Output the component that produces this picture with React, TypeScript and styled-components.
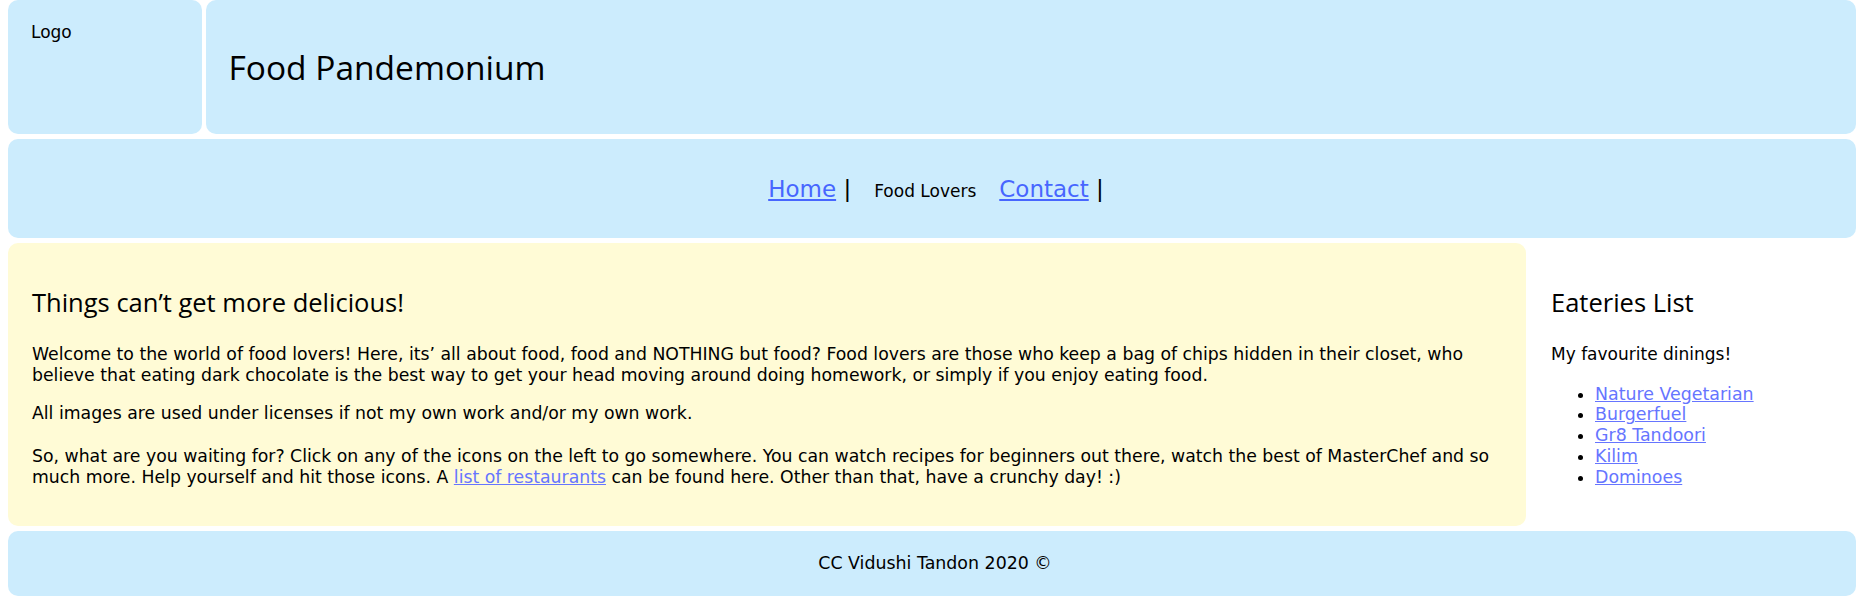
import React from "react";
import styled, { createGlobalStyle } from "styled-components";

const GlobalStyle = createGlobalStyle`
  html, body { background: #ffffff; }
  body {
    margin: 0 0 0 8px;
    font-family: "DejaVu Sans", "Liberation Sans", sans-serif;
    font-size: 17px;
    color: #000000;
  }
  * { box-sizing: border-box; }
`;

const BLUE = "#ccecfd";
const YELLOW = "#fffbd6";

const Page = styled.div`
  display: flex;
  flex-direction: column;
  gap: 5px;
  width: 1848px;
`;

const Header = styled.header`
  display: flex;
  gap: 4px;
  height: 134px;
`;

const Panel = styled.div<{ $tone?: "blue" | "yellow" }>`
  background: ${(p) => (p.$tone === "yellow" ? YELLOW : BLUE)};
  border-radius: 10px;
`;

const LogoBox = styled(Panel)`
  width: 194px;
  flex: none;
  padding: 22px 23px;
  line-height: 20px;
`;

const TitleBox = styled(Panel)`
  flex: 1;
  display: flex;
  align-items: center;
  padding-left: 22.5px;
`;

const Title = styled.h1`
  margin: 0;
  font-family: "Open Sans", sans-serif;
  font-weight: 400;
  font-size: 33.5px;
  line-height: normal;
`;

const Nav = styled(Panel).attrs({ as: "nav" })`
  height: 99px;
  display: flex;
  align-items: center;
  justify-content: center;
  padding-left: 8px;
`;

const NavList = styled.div`
  display: flex;
  align-items: baseline;
  gap: 23px;
`;

const NavItem = styled.span`
  font-size: 23px;
  line-height: normal;
`;

const NavLink = styled.a`
  color: #4766ff;
  text-decoration: underline;
`;

const NavCurrent = styled.span`
  font-size: 17px;
`;

const ContentRow = styled.div`
  display: flex;
`;

const Main = styled(Panel).attrs({ as: "main" })`
  width: 1518px;
  flex: none;
  padding: 23px 23px 20px 24px;
`;

const Aside = styled.aside`
  flex: 1;
  padding: 23px 20px 23px 25px;
`;

const Heading = styled.h2`
  margin: 21px 0 26px;
  font-family: "Open Sans", sans-serif;
  font-weight: 400;
  font-size: 25.5px;
  line-height: 31px;
`;

const Para = styled.p<{ $size?: number; $gap?: number }>`
  margin: 0 0 ${(p) => p.$gap ?? 18}px;
  font-size: ${(p) => p.$size ?? 17}px;
  line-height: 20.7px;
`;

const TextLink = styled.a`
  color: #6675ff;
  text-decoration: underline;
`;

const Eateries = styled.ul`
  margin: 19px 0 0;
  padding-left: 44px;
  font-size: 17.4px;
  line-height: 20.75px;
`;

const Footer = styled(Panel).attrs({ as: "footer" })`
  height: 65px;
  display: flex;
  align-items: center;
  justify-content: center;
  padding-left: 6px;
  font-size: 17.4px;
`;

const eateries = ["Nature Vegetarian", "Burgerfuel", "Gr8 Tandoori", "Kilim", "Dominoes"];

export default function App() {
  return (
    <>
      <GlobalStyle />
      <Page>
        <Header>
          <LogoBox>Logo</LogoBox>
          <TitleBox>
            <Title>Food Pandemonium</Title>
          </TitleBox>
        </Header>
        <Nav>
          <NavList>
            <NavItem>
              <NavLink href="#">Home</NavLink> |
            </NavItem>
            <NavCurrent>Food Lovers</NavCurrent>
            <NavItem>
              <NavLink href="#">Contact</NavLink> |
            </NavItem>
          </NavList>
        </Nav>
        <ContentRow>
          <Main $tone="yellow">
            <Heading>Things can’t get more delicious!</Heading>
            <Para $size={17.3}>
              Welcome to the world of food lovers! Here, its’ all about food, food and NOTHING but food? Food
              lovers are those who keep a bag of chips hidden in their closet, who believe that eating dark
              chocolate is the best way to get your head moving around doing homework, or simply if you enjoy
              eating food.
            </Para>
            <Para $size={17.3} $gap={22}>
              All images are used under licenses if not my own work and/or my own work.
            </Para>
            <Para $size={17.3}>
              So, what are you waiting for? Click on any of the icons on the left to go somewhere. You can watch
              recipes for beginners out there, watch the best of MasterChef and so much more. Help yourself and
              hit those icons. A <TextLink href="#">list of restaurants</TextLink> can be found here. Other than
              that, have a crunchy day! :)
            </Para>
          </Main>
          <Aside>
            <Heading>Eateries List</Heading>
            <Para>My favourite dinings!</Para>
            <Eateries>
              {eateries.map((e) => (
                <li key={e}>
                  <TextLink href="#">{e}</TextLink>
                </li>
              ))}
            </Eateries>
          </Aside>
        </ContentRow>
        <Footer>CC Vidushi Tandon 2020 ©</Footer>
      </Page>
    </>
  );
}
